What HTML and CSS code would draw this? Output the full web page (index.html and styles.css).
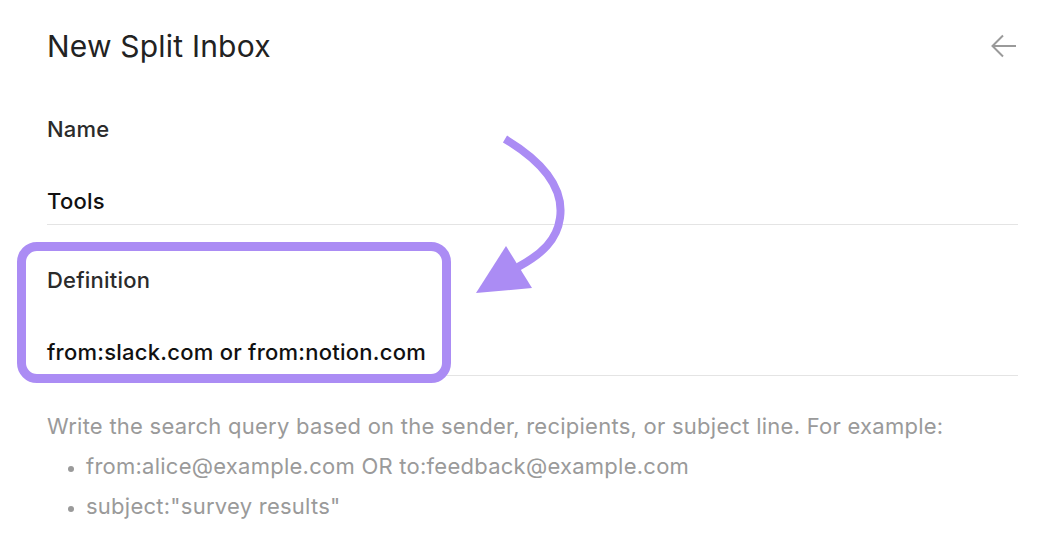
FILE: index.html
```html
<!DOCTYPE html>
<html>
<head>
<meta charset="utf-8">
<link rel="stylesheet" href="styles.css">
</head>
<body>
<div class="panel">
  <header class="header">
    <h1 class="title">New Split Inbox</h1>
    <svg class="back" width="26" height="24" viewBox="0 0 26 24" fill="none" stroke="#9a9a9a" stroke-width="2">
      <path d="M25 12H2"/>
      <path d="M12 1.5L1.5 12L12 22.5"/>
    </svg>
  </header>
  <div class="field">
    <div class="label">Name</div>
    <div class="value">Tools</div>
  </div>
  <div class="field highlighted">
    <div class="label">Definition</div>
    <div class="value">from:slack.com or from:notion.com</div>
    <div class="highlight-box"></div>
  </div>
  <div class="help">
    <p class="help-intro">Write the search query based on the sender, recipients, or subject line. For example:</p>
    <ul class="help-list">
      <li>from:alice@example.com OR to:feedback@example.com</li>
      <li>subject:"survey results"</li>
    </ul>
  </div>
  <svg class="annotation" width="1060" height="552" viewBox="0 0 1060 552">
    <path d="M505 139 C545 163 564 190 560 218 C557 240 542 254 518 267" fill="none" stroke="#ab8cf4" stroke-width="8"/>
    <path d="M506 246 L532 288 L476 293 Z" fill="#ab8cf4"/>
  </svg>
</div>
</body>
</html>
```
FILE: styles.css
```css
* { box-sizing: border-box; }
html, body { margin: 0; padding: 0; background: #fff; }
body {
  font-family: Inter, "Noto Sans", sans-serif;
  width: 1060px;
  height: 552px;
  overflow: hidden;
}
.panel {
  position: relative;
  padding: 0 42px 0 47px;
  height: 552px;
}
.header {
  display: flex;
  justify-content: space-between;
  align-items: center;
  height: 92px;
  margin-bottom: -18px;
}
.title {
  margin: 0;
  font-size: 30px;
  font-weight: 400;
  color: #222;
  letter-spacing: 0.2px;
}
.back { margin-right: 1px; }
.field {
  position: relative;
  border-bottom: 1.5px solid #e4e4e4;
  padding-top: 41px;
  padding-bottom: 9px;
}
.label {
  font-size: 22px;
  font-weight: 500;
  color: #2b2b2b;
  line-height: 28px;
  letter-spacing: 0.2px;
}
.value {
  margin-top: 44px;
  font-size: 22px;
  font-weight: 500;
  color: #111;
  line-height: 28px;
  letter-spacing: 0.25px;
}
.highlight-box {
  position: absolute;
  left: -30px;
  top: 17px;
  width: 434px;
  height: 141px;
  border: 9px solid #ab8cf4;
  border-radius: 20px;
}
.help {
  padding-top: 30px;
  color: #9a9a9a;
  font-size: 22px;
  letter-spacing: 0.25px;
}
.help-intro {
  margin: 0;
  line-height: 40px;
}
.help-list {
  margin: 0;
  padding-left: 39px;
  line-height: 40px;
}
.help-list li::marker { font-size: 18px; }
.annotation {
  position: absolute;
  left: 0;
  top: 0;
  pointer-events: none;
}
```
